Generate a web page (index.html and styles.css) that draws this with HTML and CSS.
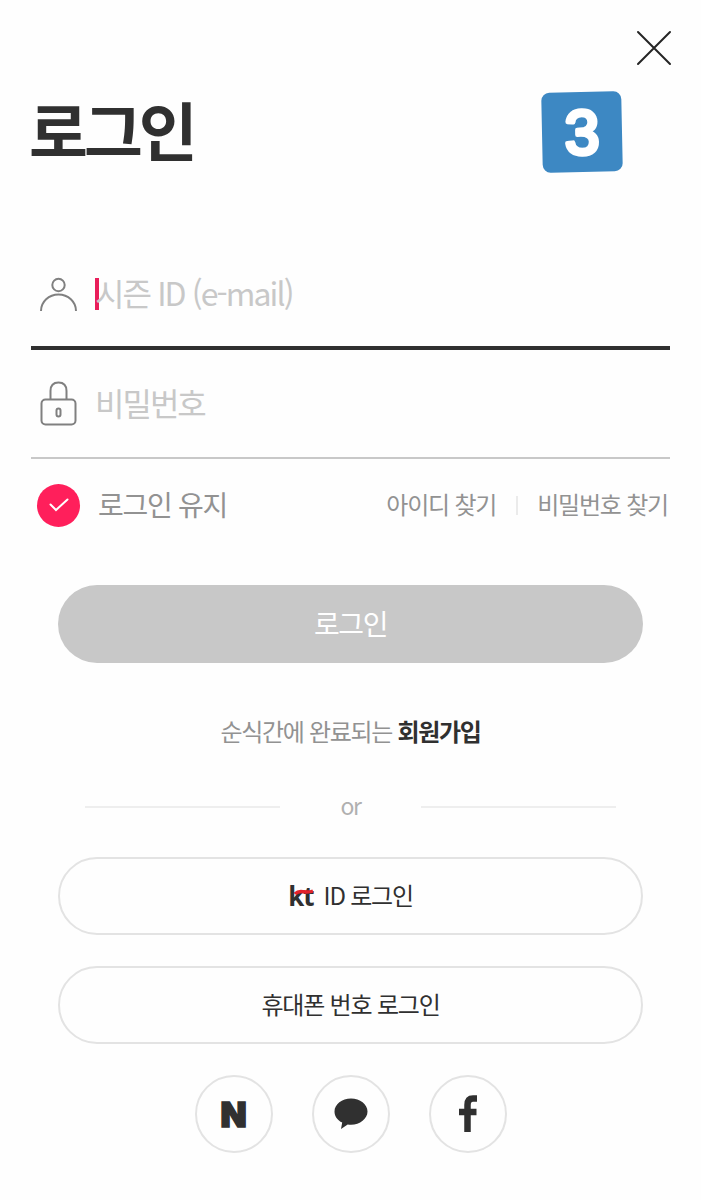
FILE: index.html
```html
<!DOCTYPE html>
<html lang="ko">
<head>
    <meta charset="UTF-8">
    <meta name="viewport" content="width=device-width, initial-scale=1.0">
    <title>로그인</title>
    <link rel="stylesheet" href="styles.css">
</head>
<body>
    <div class="top-bar">
        <svg class="close" viewBox="0 0 36 36"><path d="M2 2L34 34M34 2L2 34"/></svg>
    </div>
    <div class="title-row">
        <h1>로그인</h1>
        <svg class="step" viewBox="0 0 80 80"><text x="40" y="62">3</text></svg>
    </div>

    <div class="field active">
        <svg class="field-icon" viewBox="0 0 40 48">
            <circle cx="20.500" cy="15" r="6.200"/>
            <path d="M3 41A17.500 16.500 0 0 1 38 41"/>
        </svg>
        <span class="caret"></span>
        <span class="placeholder id">시즌 ID (e-mail)</span>
    </div>
    <div class="field">
        <svg class="field-icon" viewBox="0 0 40 48">
            <path d="M12.500 19.500V11Q12.500 2.500 20.500 2.500T28.500 11V19.500"/>
            <rect x="3.500" y="19.500" width="34" height="25" rx="4"/>
            <rect x="18.500" y="28.500" width="4" height="8" rx="2"/>
        </svg>
        <span class="placeholder">비밀번호</span>
    </div>

    <div class="options">
        <span class="check">
            <svg viewBox="0 0 20 14"><path d="M1.500 6.500L7 12L18.500 1.500"/></svg>
        </span>
        <span class="keep">로그인 유지</span>
        <a class="find">아이디 찾기</a>
        <span class="divider"></span>
        <a class="find">비밀번호 찾기</a>
    </div>

    <div class="actions">
        <button class="btn login">로그인</button>
        <p class="signup">순식간에 완료되는 <b>회원가입</b></p>
        <div class="or"><span>or</span></div>
        <button class="btn outline">
            <span class="kt">kt<svg viewBox="0 0 20 6"><path d="M1 5C4 1.500 7 2.500 10 2.800S16 3.200 19 2"/></svg></span>
            ID 로그인
        </button>
        <button class="btn outline phone">휴대폰 번호 로그인</button>
    </div>

    <div class="social">
        <a class="circle naver">N</a>
        <a class="circle">
            <svg class="talk" viewBox="0 0 34 32"><path d="M17 .5C26 .5 33.500 6.300 33.500 13.500S26 26.800 17 26.800C15.800 26.800 14.800 26.700 13.700 26.500L7 31L8.200 24.600C3.500 22.300 .5 18.200 .5 13.500C.5 6.300 8 .5 17 .5Z"/></svg>
        </a>
        <a class="circle">
            <svg class="facebook" viewBox="0 0 20 38"><path d="M9.500 37V10Q9.500 3.500 15 3.500H19M1 17H18.500"/></svg>
        </a>
    </div>
</body>
</html>
```
FILE: styles.css
```css
* {
    box-sizing: border-box;
}
body {
    margin: 0;
    padding: 30px 31px 0;
    height: 1200px;
    background: #fefefe;
    color: #303030;
    font-family: "Noto Sans CJK KR", sans-serif;
}
svg {
    display: block;
    fill: none;
}
.top-bar {
    display: flex;
    justify-content: flex-end;
    height: 36px;
    margin-right: -2px;
}
.close {
    width: 36px;
    height: 36px;
    stroke: #252525;
    stroke-width: 2;
    stroke-linecap: round;
}
.title-row {
    display: flex;
    align-items: center;
    justify-content: space-between;
    height: 80px;
    margin-top: 26px;
    padding-right: 48px;
}
h1 {
    margin: 0 0 0 -2px;
    padding-bottom: 9px;
    font-size: 64px;
    line-height: 80px;
    letter-spacing: -4px;
}
.step {
    width: 80px;
    height: 80px;
    border-radius: 8px;
    background: #3d88c3;
    transform: rotate(-1.200deg);
}
.step text {
    font-family: "Liberation Sans", sans-serif;
    font-size: 62px;
    font-weight: 400;
    text-anchor: middle;
    fill: #fff;
    stroke: #fff;
    stroke-width: 4.500;
    stroke-linejoin: round;
}
.field {
    display: flex;
    align-items: center;
    height: 109px;
    padding-left: 7px;
    border-bottom: 2px solid #c8c8c8;
}
.field.active {
    height: 108px;
    margin-top: 70px;
    border-bottom: 4px solid #303030;
}
.field-icon {
    width: 40px;
    height: 48px;
    margin-right: 17px;
    stroke: #808080;
    stroke-width: 2;
}
.caret {
    width: 4px;
    height: 32px;
    margin-right: -4px;
    background: #e91e5a;
}
.placeholder {
    padding-bottom: 4px;
    color: #c8c8c8;
    font-size: 32px;
    letter-spacing: -2px;
}
.placeholder.id {
    letter-spacing: -1.900px;
}
.options {
    display: flex;
    align-items: center;
    height: 92px;
    padding-left: 6px;
    color: #929292;
}
.check {
    display: flex;
    align-items: center;
    justify-content: center;
    width: 43px;
    height: 43px;
    border-radius: 50%;
    background: #ff1f5b;
}
.check svg {
    width: 20px;
    height: 14px;
    stroke: #fff;
    stroke-width: 2;
    stroke-linecap: round;
}
.keep {
    margin-left: 18px;
    margin-right: auto;
    padding-bottom: 3px;
    font-size: 28px;
    letter-spacing: -1.300px;
}
.find {
    padding-bottom: 4px;
    font-size: 24px;
    letter-spacing: -1.200px;
}
.find:last-child {
    margin-right: 2px;
}
.divider {
    width: 2px;
    height: 19px;
    margin: 0 19px 0 20px;
    background: #ebebeb;
}
.actions {
    display: flex;
    flex-direction: column;
    padding: 34px 27px 0;
}
.btn {
    display: flex;
    align-items: center;
    justify-content: center;
    height: 78px;
    padding: 0 0 4px;
    border: 0;
    border-radius: 39px;
    color: #303030;
    font-family: inherit;
    font-size: 24px;
    letter-spacing: -1.200px;
}
.login {
    padding-bottom: 3px;
    background: #c8c8c8;
    color: #fff;
    font-size: 28px;
    letter-spacing: -1.500px;
}
.outline {
    border: 2px solid #e3e3e3;
    background: transparent;
}
.phone {
    margin-top: 31px;
}
.signup {
    margin: 48px 0 0;
    color: #929292;
    font-size: 24px;
    line-height: 40px;
    letter-spacing: -1.300px;
    text-align: center;
}
.signup b {
    color: #303030;
}
.or {
    display: flex;
    align-items: center;
    height: 40px;
    margin: 36px 27px 30px;
    color: #b0b0b0;
    font-size: 23px;
    letter-spacing: -1.500px;
}
.or::before, .or::after {
    content: "";
    flex: 1;
    height: 2px;
    background: #eee;
}
.or span {
    width: 141px;
    padding-bottom: 5px;
    text-align: center;
}
.kt {
    position: relative;
    margin-right: 10px;
    padding-top: 4px;
    font-family: "Open Sans", sans-serif;
    font-size: 26px;
    font-weight: 700;
    letter-spacing: -1px;
}
.kt svg {
    position: absolute;
    top: 15px;
    left: 6px;
    width: 20px;
    height: 6px;
    stroke: #e3222b;
    stroke-width: 3.500;
}
.social {
    display: flex;
    justify-content: center;
    gap: 39px;
    margin-top: 31px;
}
.circle {
    display: flex;
    align-items: center;
    justify-content: center;
    width: 78px;
    height: 78px;
    border: 2px solid #e3e3e3;
    border-radius: 50%;
}
.naver {
    font-family: Inter, sans-serif;
    font-size: 34px;
    font-weight: 900;
    -webkit-text-stroke: 1.500px #303030;
}
.talk {
    width: 34px;
    height: 32px;
    fill: #303030;
}
.facebook {
    width: 20px;
    height: 38px;
    stroke: #303030;
    stroke-width: 6.500;
}
```
